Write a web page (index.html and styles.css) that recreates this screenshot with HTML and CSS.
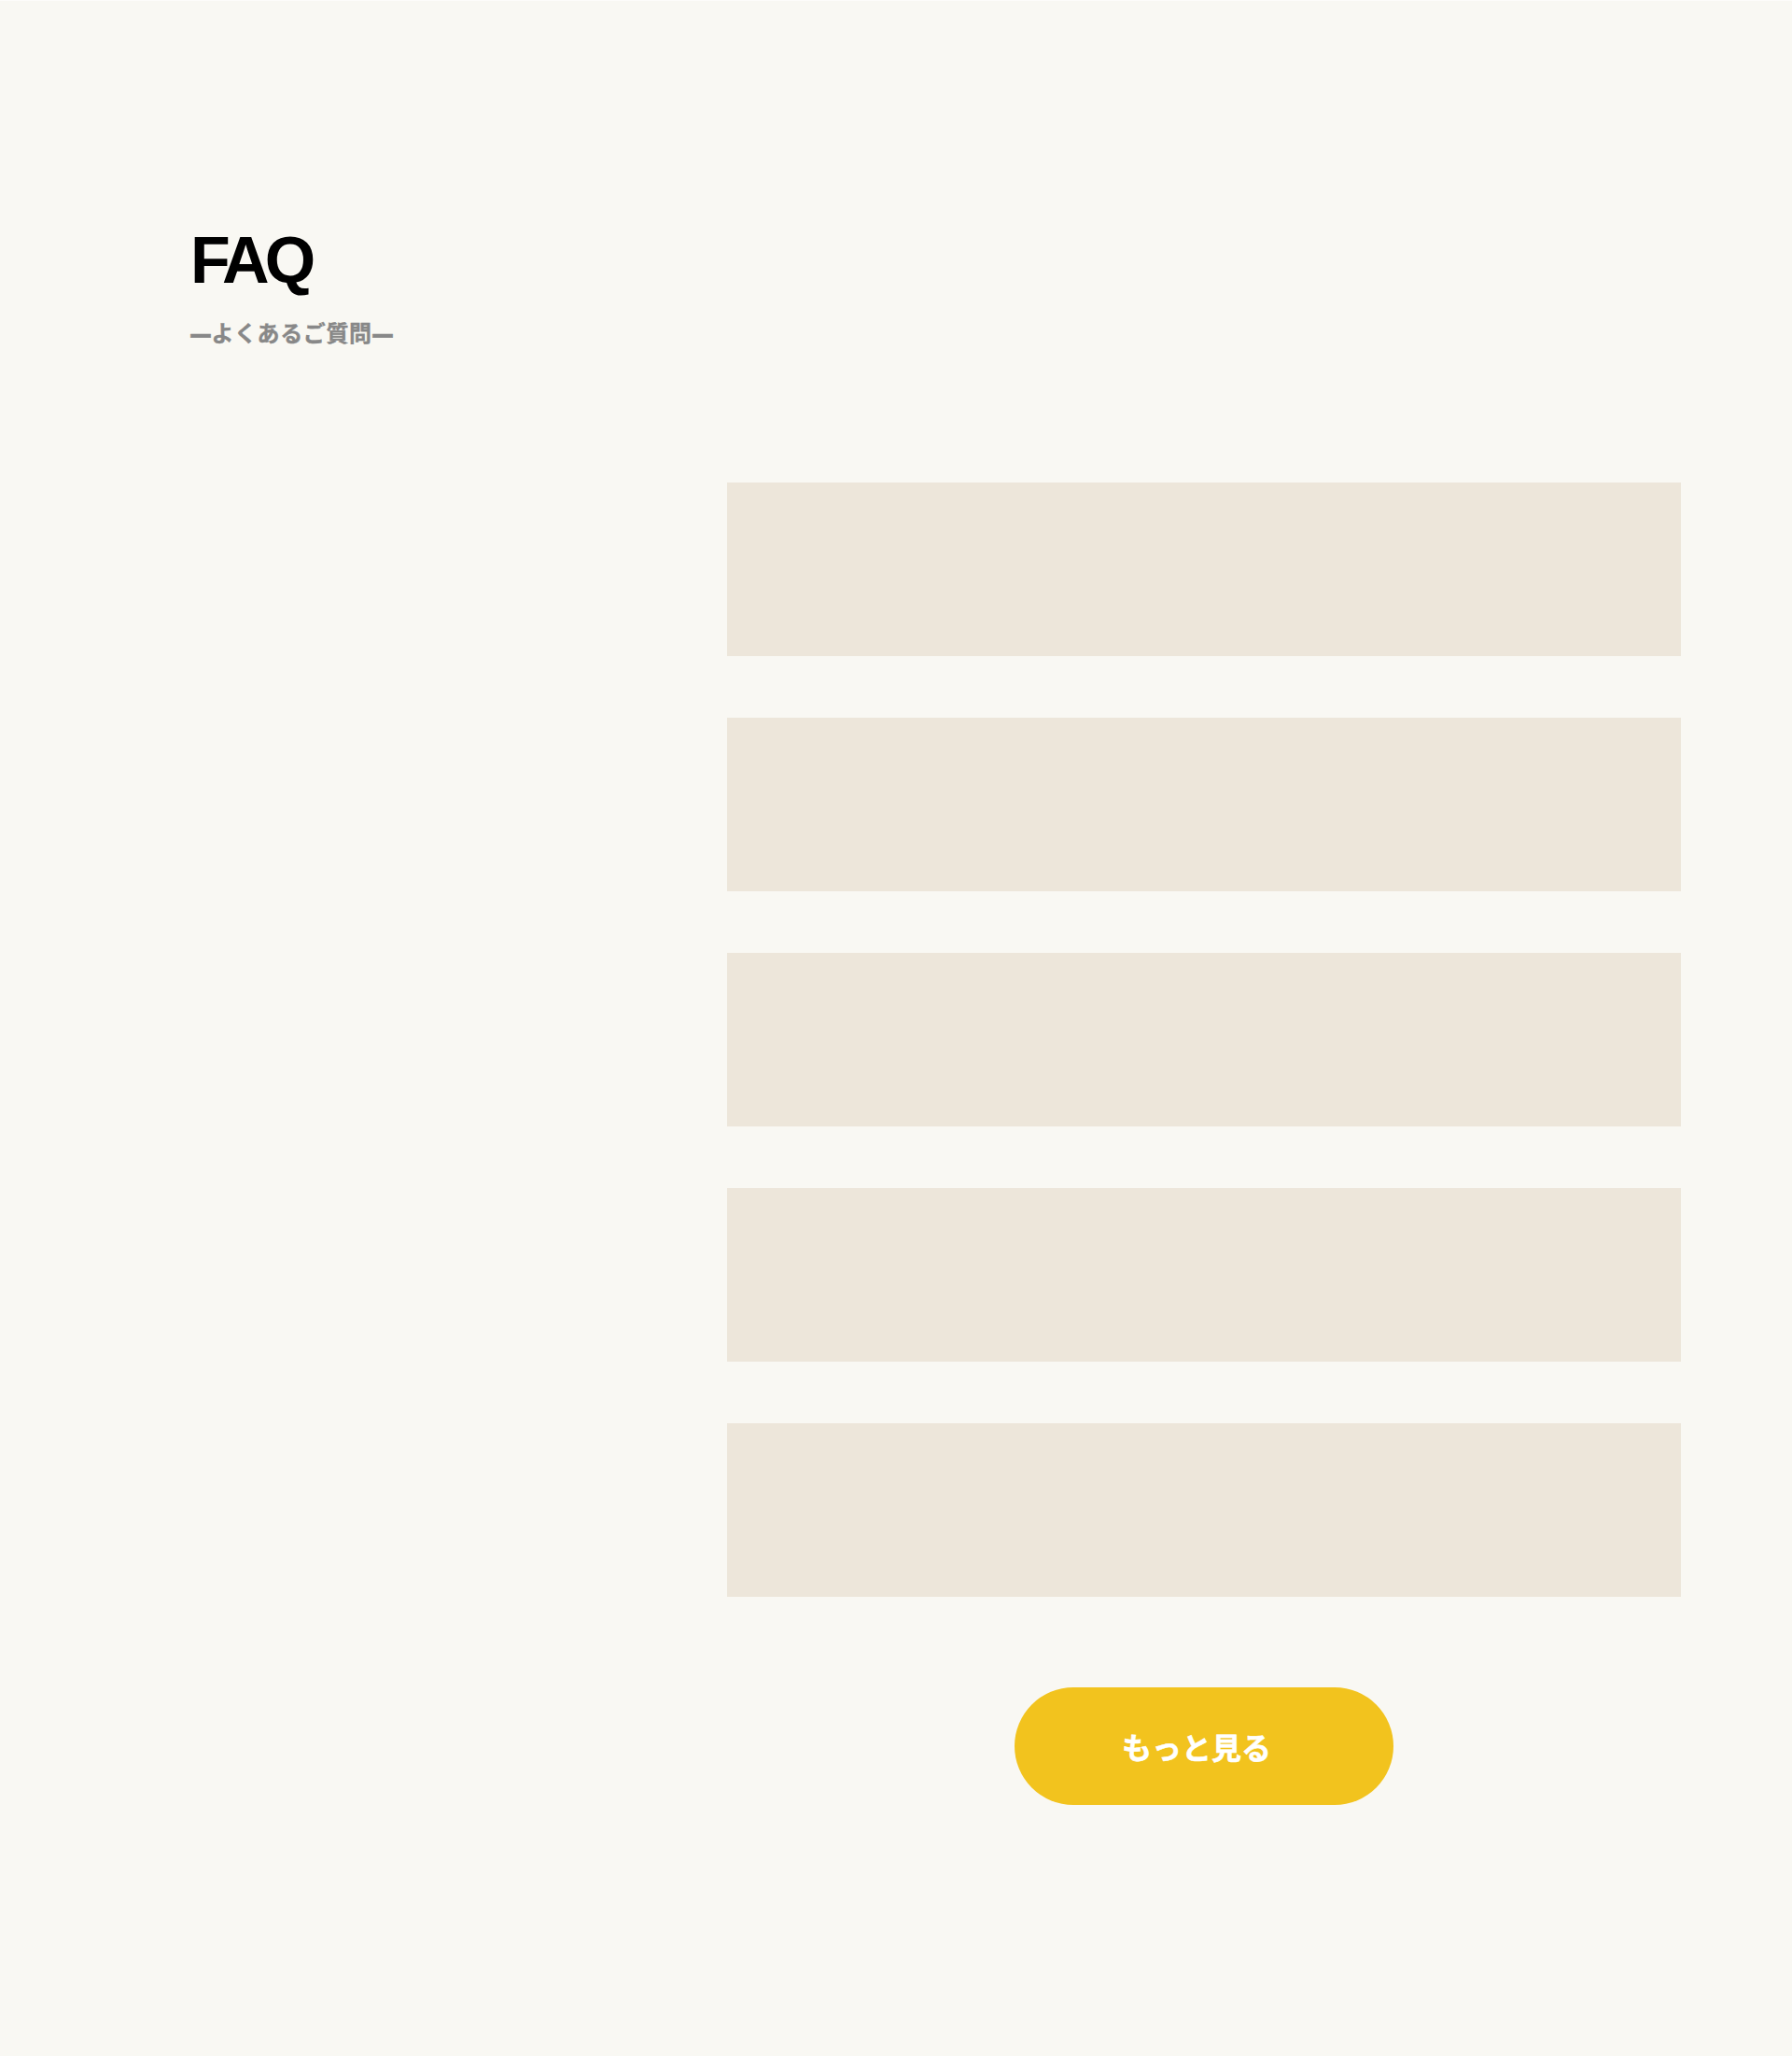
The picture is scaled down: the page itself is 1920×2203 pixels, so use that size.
FILE: index.html
```html
<!DOCTYPE html>
<html lang="ja">
<head>
<meta charset="utf-8">
<title>FAQ</title>
<link rel="stylesheet" href="styles.css">
</head>
<body>
<section class="faq">
  <header class="faq-head">
    <h2 class="faq-title">FAQ</h2>
    <p class="faq-sub"><span class="dash">—</span>よくあるご質問<span class="dash">—</span></p>
  </header>
  <div class="faq-main">
    <ul class="faq-list">
      <li class="faq-item"></li>
      <li class="faq-item"></li>
      <li class="faq-item"></li>
      <li class="faq-item"></li>
      <li class="faq-item"></li>
    </ul>
    <div class="faq-more">
      <a class="more-btn" href="#">もっと見る</a>
    </div>
  </div>
</section>
</body>
</html>
```
FILE: styles.css
```css
html, body {
  margin: 0;
  padding: 0;
}
body {
  background: #f9f8f3;
  font-family: "Liberation Sans", "Noto Sans CJK JP", sans-serif;
  border-top: 1px solid #fdfcfa;
}
.faq {
  padding: 243px 119px 269px 204px;
  height: 2202px;
  box-sizing: border-box;
}
.faq-head {
  display: flex;
  flex-direction: column;
}
.faq-title {
  margin: 0;
  font-family: "Liberation Sans", Arial, sans-serif;
  font-weight: 700;
  font-size: 70px;
  line-height: 70px;
  letter-spacing: -0.07em;
  color: #000;
}
.faq-sub {
  margin: 30px 0 0;
  font-family: "Noto Sans CJK JP", sans-serif;
  font-weight: 700;
  font-size: 24px;
  line-height: 24px;
  letter-spacing: 0.6px;
  color: #888888;
  -webkit-text-stroke: 0.4px #888888;
}
.dash {
  display: inline-block;
  transform: translateY(-1px) scale(1.1, 1.6);
}
.faq-main {
  margin-left: auto;
  width: 1022px;
  margin-top: 149px;
}
.faq-list {
  list-style: none;
  margin: 0;
  padding: 0;
  display: flex;
  flex-direction: column;
  gap: 66px;
}
.faq-item {
  height: 186px;
  background: #ede6da;
}
.faq-more {
  display: flex;
  justify-content: center;
  margin-top: 97px;
}
.more-btn {
  display: flex;
  align-items: center;
  justify-content: center;
  box-sizing: border-box;
  width: 406px;
  height: 126px;
  padding-right: 16px;
  border-radius: 63px;
  background: #f2c31e;
  color: #ffffff;
  text-decoration: none;
  font-family: "Noto Sans CJK JP", sans-serif;
  font-weight: 700;
  font-size: 32px;
  -webkit-text-stroke: 0.6px #ffffff;
}
```
